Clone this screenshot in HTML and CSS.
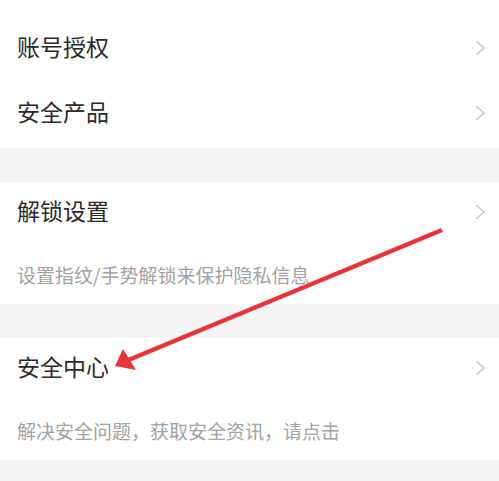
FILE: index.html
```html
<!DOCTYPE html>
<html lang="zh-CN">
<head>
  <meta charset="UTF-8" />
  <title>安全设置</title>
  <link rel="stylesheet" href="styles.css">
</head>
<body>
  <div class="page">
    <div class="group group-top">
      <div class="row">
        <span class="row-title">账号授权</span>
        <svg class="chevron" viewBox="0 0 10 16"><path d="M1 1 L9 8 L1 15" /></svg>
      </div>
      <div class="row">
        <span class="row-title">安全产品</span>
        <svg class="chevron" viewBox="0 0 10 16"><path d="M1 1 L9 8 L1 15" /></svg>
      </div>
    </div>

    <div class="group">
      <div class="row row-main">
        <span class="row-title">解锁设置</span>
        <svg class="chevron" viewBox="0 0 10 16"><path d="M1 1 L9 8 L1 15" /></svg>
      </div>
      <div class="row-desc">设置指纹/手势解锁来保护隐私信息</div>
    </div>

    <div class="group">
      <div class="row row-main">
        <span class="row-title">安全中心</span>
        <svg class="chevron" viewBox="0 0 10 16"><path d="M1 1 L9 8 L1 15" /></svg>
      </div>
      <div class="row-desc">解决安全问题，获取安全资讯，请点击</div>
    </div>

    <svg class="arrow" viewBox="0 0 499 481">
      <line x1="442" y1="230" x2="126" y2="361" />
      <polygon points="115,366 123,349 136,370" />
    </svg>
  </div>
</body>
</html>
```

FILE: styles.css
```css
body {
  margin: 0;
  background: #f5f5f5;
  font-family: "Noto Sans CJK SC", "Noto Sans", sans-serif;
}
.page {
  position: relative;
  width: 499px;
  height: 481px;
  overflow: hidden;
}
.group {
  background: #fff;
  margin-bottom: 34px;
  padding: 0 14px 0 17px;
}
.group-top {
  padding-top: 15px;
  padding-bottom: 3px;
}
.row {
  display: flex;
  align-items: center;
  justify-content: space-between;
  height: 65px;
}
.row-main {
  height: 60px;
}
.row-title {
  font-size: 23px;
  color: #2a2a2a;
  line-height: 1;
  margin-top: -3px;
}
.row-desc {
  height: 62px;
  padding-top: 20px;
  box-sizing: border-box;
  font-size: 19px;
  line-height: 25px;
  color: #a2a2a2;
}
.chevron {
  width: 10px;
  height: 16px;
  fill: none;
  stroke: #c6c6c6;
  stroke-width: 1.6;
}
.arrow {
  position: absolute;
  left: 0;
  top: 0;
  width: 499px;
  height: 481px;
}
.arrow line {
  stroke: #e8353a;
  stroke-width: 4.5;
}
.arrow polygon {
  fill: #e8353a;
}
```
